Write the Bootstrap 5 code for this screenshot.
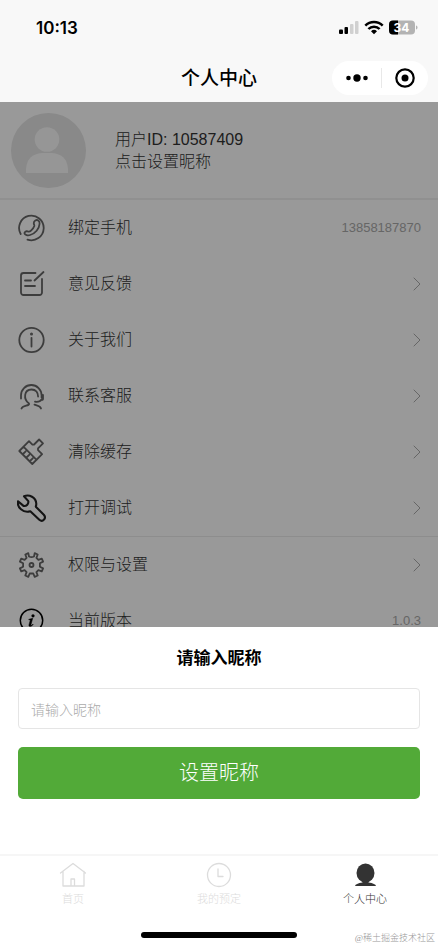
<!DOCTYPE html>
<html lang="zh-CN">
<head>
<meta charset="utf-8">
<meta name="viewport" content="width=device-width, initial-scale=1">
<title>个人中心</title>
<link rel="stylesheet" href="https://cdn.jsdelivr.net/npm/bootstrap@5.3.0/dist/css/bootstrap.min.css">
<style>
  body { font-family: "Liberation Sans", "Noto Sans CJK SC", sans-serif; font-size: 16px; font-weight: 300; line-height: 22px; color: #333; background: #fff; }
  svg { display: block; flex: none; }
  .line-art { fill: none; stroke: currentColor; stroke-linecap: round; stroke-linejoin: round; }
  .top-area { background: #f8f8f8; color: #000; }
  .status-row { height: 54px; padding: 2px 20px 0 36px; }
  .clock-text { font: 600 17px/22px Inter, sans-serif; }
  .title-row { display: grid; grid-template-columns: 1fr auto 1fr; height: 48px; }
  .title-row h1 { font-size: 19px; line-height: 24px; font-weight: 500; padding-top: 2px; }
  .capsule { width: 96px; height: 34px; border-radius: 17px; background: #fff; gap: 13px; margin-right: 10px; }
  .capsule button { color: #000; }
  .capsule-line { width: 1px; height: 20px; background: #e8e8e8; }
  .profile { padding: 11px; height: 98px; gap: 29px; border-bottom: 2px solid #f0f0f0; }
  .profile-text { padding-top: 2px; }
  .menu-row { height: 56px; padding: 0 17px; gap: 22px; color: #333; }
  .menu-row .glyph { color: #666; }
  .menu-row .glyph-dark { color: #222; }
  .row-value { font-size: 13px; color: #aaa; }
  .row-arrow { color: #aaa; }
  .group-line { border-top: 1px solid #ececec; }
  .dim { background: rgba(0, 0, 0, .4); }
  .sheet { padding: 20px 18px 55px; }
  .sheet h2 { font-size: 17px; line-height: 24px; color: #000; margin-bottom: 17px; }
  .nick-input { height: 41px; padding: 2px 12px 0; font-size: 14px; font-weight: 300; border-color: #e5e5e5; border-radius: 4px; margin-bottom: 18px; }
  .nick-input::placeholder { color: #aaa; }
  .nick-btn { --bs-btn-bg: #52aa38; --bs-btn-color: #fff; --bs-btn-hover-bg: #47962f; --bs-btn-hover-color: #fff; --bs-btn-border-width: 0; --bs-btn-font-weight: 300; height: 52px; font-size: 20px; border-radius: 5px; }
  .tabs { border-top: 2px solid #f6f6f6; padding-top: 5px; }
  .tabs a { flex: 1; font-size: 11px; line-height: 16px; color: #dcdcdc; gap: 2px; }
  .tabs a.active { color: #333; }
  .bottom-row { display: grid; grid-template-columns: 1fr auto 1fr; height: 24px; padding: 0 3px; }
  .home-bar { width: 156px; height: 6px; border-radius: 3px; background: #000; }
  .credit { font-family: "Liberation Serif", "Noto Sans CJK SC", serif; font-size: 9px; line-height: 12px; padding-top: 6px; color: #999; }
</style>
<script src="https://cdn.jsdelivr.net/npm/bootstrap@5.3.0/dist/js/bootstrap.bundle.min.js"></script>
</head>
<body class="d-flex flex-column vh-100 overflow-hidden">
<header class="top-area">
  <div class="status-row d-flex align-items-center justify-content-between">
    <span class="clock-text">10:13</span>
    <svg width="79" height="16" viewBox="0 0 79 16" aria-hidden="true">
      <rect x="0" y="9.500" width="4" height="4.500" rx="1"/><rect x="5.500" y="7" width="3.500" height="7" rx="1"/>
      <rect x="11" y="4" width="3.500" height="10" rx="1" fill="#d0d0d0"/><rect x="16" y="1" width="3.500" height="13" rx="1" fill="#d0d0d0"/>
      <g fill="none" stroke="#000" stroke-width="2.500"><path d="M26.300 5.700a12.300 12.300 0 0 1 17.400 0"/><path d="M29.400 9a7.800 7.800 0 0 1 11.200 0"/></g>
      <path d="M32 11.300a4.300 4.300 0 0 1 6 0l-3 3z"/>
      <path d="M54 0.500h18a4 4 0 0 1 4 4v6a4 4 0 0 1-4 4H54a4 4 0 0 1-4-4v-6a4 4 0 0 1 4-4z" fill="#b3b3b3"/>
      <path d="M59 .5h-5a4 4 0 0 0-4 4v6a4 4 0 0 0 4 4h5z"/><path d="M77 5.500q1.500 0 1.500 2t-1.500 2z" fill="#b3b3b3"/>
      <text x="62.500" y="12" text-anchor="middle" font-family="Inter" font-size="12" font-weight="700" fill="#fff">34</text>
    </svg>
  </div>
  <div class="title-row align-items-center">
    <span></span>
    <h1 class="mb-0">个人中心</h1>
    <div class="capsule d-flex align-items-center justify-content-center ms-auto">
      <button class="btn border-0 p-0" type="button" aria-label="更多"><svg width="22" height="10" viewBox="0 0 22 10"><circle cx="2.500" cy="5" r="2.300"/><circle cx="11" cy="5" r="3.700"/><circle cx="19.500" cy="5" r="2.300"/></svg></button>
      <span class="capsule-line"></span>
      <button class="btn border-0 p-0" type="button" aria-label="关闭"><svg width="20" height="20" viewBox="0 0 20 20"><circle cx="10" cy="10" r="8.700" fill="none" stroke="#000" stroke-width="2.200"/><circle cx="10" cy="10" r="3.500"/></svg></button>
    </div>
  </div>
</header>

<main class="position-relative flex-grow-1 overflow-hidden">
  <section class="profile d-flex align-items-center">
    <svg width="75" height="75" viewBox="0 0 75 75" aria-hidden="true"><circle cx="37.500" cy="37.500" r="37.500" fill="#e4e4e4"/><circle cx="36" cy="26.500" r="12.300" fill="#fafafa"/><path d="M15 60v-4q1-15 16-16h10q15 1 16 16v4z" fill="#fafafa"/></svg>
    <div class="profile-text"><div>用户ID: 10587409</div><div>点击设置昵称</div></div>
  </section>
  <nav>
    <a href="#" class="menu-row d-flex align-items-center text-decoration-none">
      <svg class="glyph line-art" width="29" height="30" viewBox="0 0 29 30" stroke-width="1.800"><path d="M3.700 21A12.300 12.300 0 1 1 10.500 26.600"/><path d="M18.300 7.600c1.800-1.500 4.700.2 4.300 3.200-.4 5-4.300 9.800-9.500 11.200-2.300.7-5.200 0-5.600-1.500-.4-1.600 1.600-2.600 3-2.100 1.500.5 2.400.4 3.500-.7 1.500-1.500 2.800-3.100 3.300-4.700.2-1-.6-1.700-.5-3 0-1 .6-1.800 1.500-2.400z"/></svg>
      <span class="flex-grow-1">绑定手机</span><span class="row-value">13858187870</span>
    </a>
    <a href="#" class="menu-row d-flex align-items-center text-decoration-none">
      <svg class="glyph line-art" width="29" height="30" viewBox="0 0 29 30" stroke-width="1.800"><path d="M18.500 4H6.500a2.500 2.500 0 0 0-2.500 2.500v17A2.500 2.500 0 0 0 6.500 26h16a2.500 2.500 0 0 0 2.500-2.500V10M17.500 11.500l9-8.500M8 11.500h6M8 17h10"/></svg>
      <span class="flex-grow-1">意见反馈</span>
      <svg class="row-arrow line-art" width="9" height="14" viewBox="0 0 9 14"><path d="M2 1l6 6-6 6"/></svg>
    </a>
    <a href="#" class="menu-row d-flex align-items-center text-decoration-none">
      <svg class="glyph line-art" width="29" height="30" viewBox="0 0 29 30" stroke-width="1.800"><circle cx="14.500" cy="15" r="12.200"/><path d="M14.500 12.800v8.700"/><circle cx="14.500" cy="9" r=".6" fill="currentColor"/></svg>
      <span class="flex-grow-1">关于我们</span>
      <svg class="row-arrow line-art" width="9" height="14" viewBox="0 0 9 14"><path d="M2 1l6 6-6 6"/></svg>
    </a>
    <a href="#" class="menu-row d-flex align-items-center text-decoration-none">
      <svg class="glyph line-art" width="29" height="30" viewBox="0 0 29 30" stroke-width="1.800"><path d="M4 17.500v-3.200a10.300 10.300 0 0 1 20.600 0v2.200M12 22.500C6 18 7 8.500 14.500 8.500c4.500 0 6.600 3.200 6.600 7M26 14v4q-.3 1.300-1.600.7M24.500 18.500c-1.200 2-3.400 2.700-6.500 2.200M12 22.500c1 2.500-6.500 1.700-7.500 5M17.500 23.700c2.700 1.100 5.600 1 6.500 3.800"/></svg>
      <span class="flex-grow-1">联系客服</span>
      <svg class="row-arrow line-art" width="9" height="14" viewBox="0 0 9 14"><path d="M2 1l6 6-6 6"/></svg>
    </a>
    <a href="#" class="menu-row d-flex align-items-center text-decoration-none">
      <svg class="glyph line-art" width="29" height="30" viewBox="0 0 29 30" stroke-width="1.800"><path d="M12 4.200l3.400 3.400 1.700-.1 5-5 3.900 3.900-5 5v1.700l4.100 4.100L15.300 27 2.300 14zM6.400 9.700l13.200 13.200M9.500 20.500l2.700-2.700M6 17l2.700-2.700M13 24l2.700-2.700"/></svg>
      <span class="flex-grow-1">清除缓存</span>
      <svg class="row-arrow line-art" width="9" height="14" viewBox="0 0 9 14"><path d="M2 1l6 6-6 6"/></svg>
    </a>
    <a href="#" class="menu-row d-flex align-items-center text-decoration-none">
      <svg class="glyph-dark line-art" width="29" height="30" viewBox="0 0 29 30" stroke-width="2.100"><path d="M7 2.300c5.200-2.200 12 1 12.300 7.400 0 1.600-.5 3-.5 3l8 8c3 3.500-1 8-4.500 5l-9-8.400C6 19.400-.2 13.200 1 7.200l5.500 4.700c3.200.4 5.300-1.900 4.800-4.800z" transform="translate(0 1)"/></svg>
      <span class="flex-grow-1">打开调试</span>
      <svg class="row-arrow line-art" width="9" height="14" viewBox="0 0 9 14"><path d="M2 1l6 6-6 6"/></svg>
    </a>
    <div class="group-line"></div>
    <a href="#" class="menu-row d-flex align-items-center text-decoration-none">
      <svg class="glyph line-art" width="29" height="30" viewBox="0 0 29 30" stroke-width="1.800"><path d="M12 6.500l-.7-3.300-3 1.300 1.300 3.400-2 2-3.400-1.300-1.300 3 3.200 1.600v3.600l-3.200 1.600 1.300 3 3.400-1.300 2 2-1.300 3.400 3 1.300 1.400-3.300h3.600l1.400 3.300 3-1.300-1.300-3.400 2-2 3.400 1.300 1.300-3-3.200-1.600v-3.600l3.200-1.600-1.300-3-3.400 1.300-2-2 1.300-3.400-3-1.300-.7 3.300q-2.500 1.300-5 0z"/><circle cx="14.500" cy="15" r="2"/></svg>
      <span class="flex-grow-1">权限与设置</span>
      <svg class="row-arrow line-art" width="9" height="14" viewBox="0 0 9 14"><path d="M2 1l6 6-6 6"/></svg>
    </a>
    <a href="#" class="menu-row d-flex align-items-center text-decoration-none">
      <svg class="text-black" width="29" height="30" viewBox="0 0 29 30"><circle cx="14.500" cy="14.500" r="11.200" fill="none" stroke="#000" stroke-width="1.500"/><circle cx="16" cy="9.800" r="1.600"/><path d="M11.800 13.300c1.300-.2 2.800-.5 3.900-1l-1.800 6.600c-.2.900.5.900 1.900-.8l.4.400c-1.500 2.200-4.800 3-4.200.2l1.200-4.300c.1-.6-.5-.6-1.400-.6z" stroke="#000" stroke-width=".5"/></svg>
      <span class="flex-grow-1">当前版本</span><span class="row-value">1.0.3</span>
    </a>
  </nav>
  <div class="dim position-absolute top-0 start-0 w-100 h-100"></div>
</main>

<form class="sheet bg-white">
  <h2 class="text-center fw-bold"><label for="nickname">请输入昵称</label></h2>
  <input id="nickname" type="text" class="form-control nick-input" placeholder="请输入昵称">
  <button type="button" class="btn nick-btn w-100 d-flex align-items-center justify-content-center">设置昵称</button>
</form>

<footer class="bg-white">
  <nav class="tabs d-flex">
    <a href="#" class="d-flex flex-column align-items-center text-decoration-none">
      <svg class="line-art" width="28" height="28" viewBox="0 0 28 28" stroke-width="1.300"><path d="M1.500 12L14 2.500 26.500 12M4 10.500V25h21V10.500M12 25v-7h3.500v7"/></svg>首页
    </a>
    <a href="#" class="d-flex flex-column align-items-center text-decoration-none">
      <svg class="line-art" width="28" height="28" viewBox="0 0 28 28" stroke-width="1.300"><circle cx="14" cy="14" r="11.500"/><path d="M13 8v7.500h5"/></svg>我的预定
    </a>
    <a href="#" class="active d-flex flex-column align-items-center text-decoration-none" aria-current="page">
      <svg width="28" height="28" viewBox="0 0 28 28" fill="currentColor"><ellipse cx="14.500" cy="12" rx="9" ry="9.500"/><path d="M11.500 19h6v2.500q7 1 7.500 3.500H4q.5-2.500 7.500-3.500z"/></svg>个人中心
    </a>
  </nav>
  <div class="mt-3 bottom-row align-items-center">
    <span></span><span class="home-bar"></span><span class="credit text-end">@稀土掘金技术社区</span>
  </div>
</footer>
</body>
</html>
